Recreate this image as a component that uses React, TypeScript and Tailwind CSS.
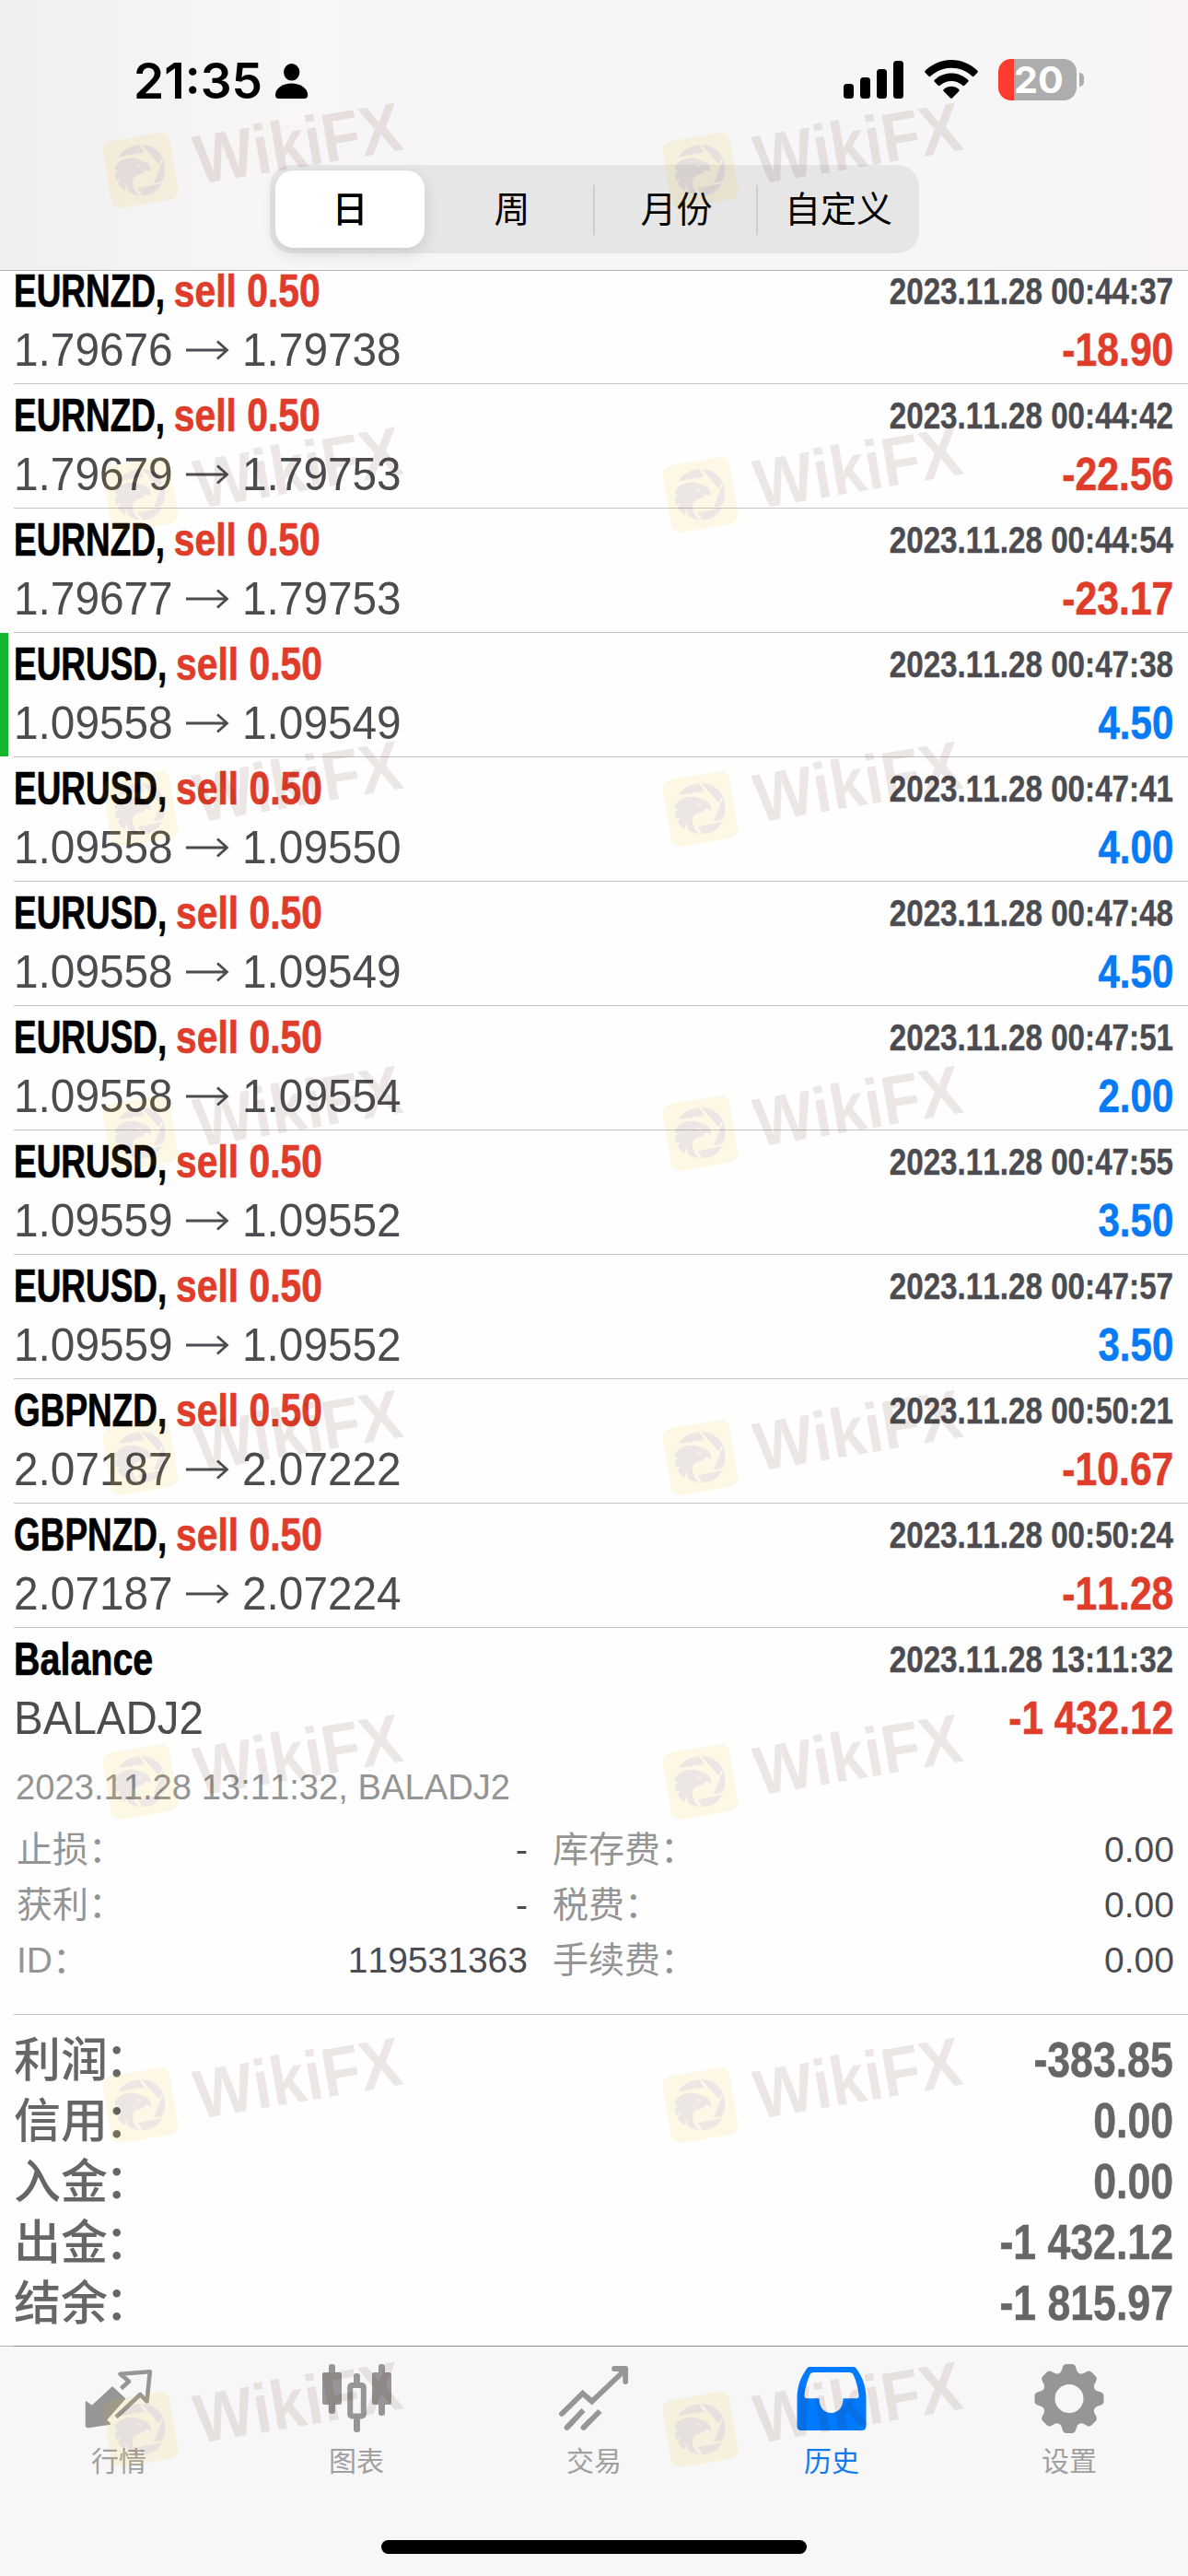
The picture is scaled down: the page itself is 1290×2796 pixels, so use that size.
import React from "react";

type Deal = {
  symbol: string;
  from: string;
  to: string;
  time: string;
  profit: string;
  marked?: boolean;
};

const deals: Deal[] = [
  { symbol: "EURNZD", from: "1.79676", to: "1.79738", time: "2023.11.28 00:44:37", profit: "-18.90" },
  { symbol: "EURNZD", from: "1.79679", to: "1.79753", time: "2023.11.28 00:44:42", profit: "-22.56" },
  { symbol: "EURNZD", from: "1.79677", to: "1.79753", time: "2023.11.28 00:44:54", profit: "-23.17" },
  { symbol: "EURUSD", from: "1.09558", to: "1.09549", time: "2023.11.28 00:47:38", profit: "4.50", marked: true },
  { symbol: "EURUSD", from: "1.09558", to: "1.09550", time: "2023.11.28 00:47:41", profit: "4.00" },
  { symbol: "EURUSD", from: "1.09558", to: "1.09549", time: "2023.11.28 00:47:48", profit: "4.50" },
  { symbol: "EURUSD", from: "1.09558", to: "1.09554", time: "2023.11.28 00:47:51", profit: "2.00" },
  { symbol: "EURUSD", from: "1.09559", to: "1.09552", time: "2023.11.28 00:47:55", profit: "3.50" },
  { symbol: "EURUSD", from: "1.09559", to: "1.09552", time: "2023.11.28 00:47:57", profit: "3.50" },
  { symbol: "GBPNZD", from: "2.07187", to: "2.07222", time: "2023.11.28 00:50:21", profit: "-10.67" },
  { symbol: "GBPNZD", from: "2.07187", to: "2.07224", time: "2023.11.28 00:50:24", profit: "-11.28" },
];

const details = [
  { label: "止损：", value: "-", label2: "库存费：", value2: "0.00" },
  { label: "获利：", value: "-", label2: "税费：", value2: "0.00" },
  { label: "ID：", value: "119531363", label2: "手续费：", value2: "0.00" },
];

const totals = [
  { label: "利润", value: "-383.85" },
  { label: "信用", value: "0.00" },
  { label: "入金", value: "0.00" },
  { label: "出金", value: "-1 432.12" },
  { label: "结余", value: "-1 815.97" },
];

function StatusBar() {
  return (
    <div className="flex h-[179px] items-start justify-between pl-[145px] pr-[113px]">
      <div className="flex items-start pt-[56px]">
        <span className="w-[154px] whitespace-nowrap font-[Inter] text-[53px] font-semibold leading-[65px] text-black">
          <span className="inline-block origin-left scale-x-[1.005]">21:35</span>
        </span>
        <svg className="mt-[13px]" width="36" height="38" viewBox="0 0 36 38">
          <ellipse cx="17.7" cy="9.3" rx="8.6" ry="9.3" />
          <path d="M0 34c0-7 8-12.5 17.6-12.5S35.200 27 35.200 34c0 2.800-1.200 4-4 4H4c-2.800 0-4-1.200-4-4z" />
        </svg>
      </div>
      <div className="flex items-start pt-[64px]">
        <svg width="66" height="44" viewBox="0 0 66 44">
          <rect x="0" y="27" width="11" height="16" rx="3.500" />
          <rect x="18" y="20" width="11" height="23" rx="3.500" />
          <rect x="36" y="11" width="11" height="32" rx="3.500" />
          <rect x="54" y="2" width="11" height="41" rx="3.500" />
        </svg>
        <svg className="ml-[22px]" width="58" height="44" viewBox="0 0 58 44">
          <path d="M29 1C18 1 8 5.500.8 12.600c-.8.8-.8 1.700 0 2.500l3.400 3.500c.8.8 1.600.8 2.400 0C12.600 13 20.500 9.800 29 9.800S45.400 13 51.400 18.600c.8.8 1.600.8 2.400 0l3.400-3.500c.8-.8.8-1.700 0-2.500C50 5.500 40 1 29 1z" />
          <path d="M29 15.500c-7 0-13.300 2.700-18 7.100-.8.8-.8 1.700 0 2.500l3.500 3.500c.8.8 1.600.8 2.400 0 3.300-2.900 7.500-4.600 12.100-4.600s8.800 1.700 12.100 4.600c.8.8 1.600.8 2.400 0l3.500-3.500c.8-.8.8-1.700 0-2.500-4.700-4.400-11-7.100-18-7.100z" />
          <path d="M29 29.800c-3.100 0-5.900 1.100-8 2.900-.9.8-.9 1.700-.1 2.500l6.900 7c.8.8 1.600.8 2.400 0l6.900-7c.8-.8.8-1.700-.1-2.500-2.100-1.800-4.900-2.900-8-2.900z" />
        </svg>
        <div className="ml-[22px] flex h-[45px] w-[85px] rounded-[14px] bg-[linear-gradient(90deg,#ff3b30_17px,#adadad_17px)]">
          <span className="pl-[17px] font-[Inter] text-[40px] font-bold leading-[45px] text-white">
            <span className="inline-block origin-left scale-x-[1.03]">20</span>
          </span>
        </div>
        <div className="ml-[3px] mt-[15px] h-[15px] w-[5px] rounded-r-full bg-[#adadad]" />
      </div>
    </div>
  );
}

function PeriodTabs() {
  return (
    <div className="ml-[293px] flex h-[96px] w-[705px] items-center rounded-[24px] bg-[#e6e6e7] pt-px text-[39px] text-black">
      <div className="-mt-px ml-[6px] flex h-[84px] w-[162px] items-center justify-center rounded-[20px] bg-white pt-[3px] font-medium shadow-[0_6px_18px_rgba(0,0,0,0.12)]">
        日
      </div>
      <div className="flex h-[54px] w-[185px] items-center justify-center border-r-2 border-[#cfcfd1] pl-[7px] pt-[2px]">周</div>
      <div className="flex h-[54px] w-[177px] items-center justify-center border-r-2 border-[#cfcfd1] pl-[2px] pt-[2px]">月份</div>
      <div className="flex h-[54px] flex-1 items-center justify-center pt-[2px]">自定义</div>
    </div>
  );
}

function Arrow() {
  return (
    <svg className="ml-[14px] mr-[14px]" width="48" height="22" viewBox="0 0 48 22" fill="none" stroke="#4b4b50" strokeWidth="2.800">
      <path d="M1 11h44M35 1.500l10.500 9.500L35 20.500" />
    </svg>
  );
}

function DealRow({ deal }: { deal: Deal }) {
  const tone = deal.profit.startsWith("-") ? "scale-x-[0.862] text-[#df3c2b]" : "scale-x-[0.85] text-[#067bf5]";
  return (
    <div className="flex h-[135px]">
      <div className={deal.marked ? "h-[134px] w-[9px] bg-[#15b62f]" : "h-[134px] w-[9px]"} />
      <div className="ml-[6px] flex flex-1 flex-col border-b border-[#c3c3c5] pr-[16px] pt-[6px]">
        <div className="flex h-[57px] justify-between">
          <div className="w-[420px] whitespace-nowrap text-[49.5px] font-bold leading-[56px] text-black [-webkit-text-stroke:0.7px]">
            <span className="inline-block origin-left scale-x-[0.746]">
              {deal.symbol},
              <span className="ml-[13px] inline-block origin-left scale-x-[1.105] text-[#df3c2b]">sell 0.50</span>
            </span>
          </div>
          <span className="origin-right scale-x-[0.82] whitespace-nowrap text-[40.5px] font-bold leading-[56px] text-[#4b4b50] [-webkit-text-stroke:0.4px]">
            {deal.time}
          </span>
        </div>
        <div className="flex h-[70px] justify-between text-[49.5px] leading-[70px]">
          <div className="flex items-center text-[#4b4b50]">
            <span className="w-[172px] origin-left scale-x-[0.965]">{deal.from}</span>
            <Arrow />
            <span className="w-[172px] origin-left scale-x-[0.965]">{deal.to}</span>
          </div>
          <span className={`origin-right font-bold [-webkit-text-stroke:0.6px] ${tone}`}>{deal.profit}</span>
        </div>
      </div>
    </div>
  );
}

function BalanceRow() {
  return (
    <div className="ml-[15px] h-[420px] border-b border-[#c3c3c5] pr-[16px] pt-[6px]">
      <div className="flex h-[57px] justify-between">
        <span className="origin-left scale-x-[0.797] text-[49.5px] font-bold leading-[56px] text-black [-webkit-text-stroke:0.7px]">
          Balance
        </span>
        <span className="origin-right scale-x-[0.82] whitespace-nowrap text-[40.5px] font-bold leading-[56px] text-[#4b4b50] [-webkit-text-stroke:0.4px]">
          2023.11.28 13:11:32
        </span>
      </div>
      <div className="flex h-[70px] justify-between text-[49.5px] leading-[70px]">
        <span className="origin-left scale-x-[0.96] text-[#4b4b50]">BALADJ2</span>
        <span className="origin-right scale-x-[0.855] font-bold text-[#df3c2b] [-webkit-text-stroke:0.6px]">-1 432.12</span>
      </div>
      <div className="flex h-[78px] pl-[2px] pt-[7px]">
        <span className="origin-left scale-x-[0.979] text-[39px] leading-[66px] text-[#949494]">
          2023.11.28 13:11:32, BALADJ2
        </span>
      </div>
      {details.map((d) => (
        <div key={d.label} className="flex h-[60px] items-center text-[39px] leading-[60px] text-[#949494]">
          <div className="flex w-[558px] justify-between pl-[3px]">
            <span>{d.label}</span>
            <span className="text-[#4b4b50]">{d.value}</span>
          </div>
          <div className="-mr-px flex flex-1 justify-between pl-[27px]">
            <span>{d.label2}</span>
            <span className="text-[#4b4b50]">{d.value2}</span>
          </div>
        </div>
      ))}
    </div>
  );
}

function Totals() {
  return (
    <div className="pl-[15px] pr-[16px] pt-[17px] text-[#666666]">
      {totals.map((t) => (
        <div key={t.label} className="flex h-[66px] justify-between">
          <span className="text-[51px] font-medium leading-[66px]">
            {t.label}
            <span className="-ml-[3px]">：</span>
          </span>
          <span className="origin-right scale-x-[0.842] text-[53px] font-bold leading-[64px] [-webkit-text-stroke:0.6px]">{t.value}</span>
        </div>
      ))}
    </div>
  );
}

function QuotesIcon() {
  return (
    <svg width="80" height="80" viewBox="0 0 80 80" strokeLinejoin="round">
      <path d="M4.500 47L11 51.500 33 31 46.500 43.500 26.300 66.500 30.500 71 6.500 74.500 4.500 73.500z" fill="#969696" stroke="#969696" strokeWidth="1.500" />
      <path d="M42.500 32.500L51 24.700 41.500 16.800 73.800 14.300 70.500 46.500 63.300 39 37 63.500" fill="none" stroke="#969696" strokeWidth="4.600" />
    </svg>
  );
}

function ChartIcon() {
  return (
    <svg width="80" height="80" viewBox="0 0 80 80" fill="#969696">
      <rect x="10" y="6" width="7" height="54" rx="3" />
      <rect x="3" y="15" width="21" height="35" rx="2" />
      <rect x="64" y="6" width="7" height="56" rx="3" />
      <rect x="57" y="15" width="21" height="35" rx="2" />
      <rect x="37" y="16" width="7" height="12" rx="3" />
      <rect x="37" y="64" width="7" height="16" rx="3" />
      <rect x="33.200" y="29" width="14.600" height="33.500" rx="2" fill="none" stroke="#969696" strokeWidth="6" />
    </svg>
  );
}

function TradeIcon() {
  return (
    <svg width="80" height="80" viewBox="0 0 80 80" fill="none" stroke="#969696" strokeWidth="5.800">
      <path d="M5 60L27.700 37.800 37.700 46.500 73 13" strokeLinecap="round" />
      <path d="M62 11h12.200v14" strokeLinecap="round" strokeLinejoin="round" />
      <path d="M10.500 75L28.500 56M28.500 75L46.500 57" />
      <path d="M10.500 75L17 68.200M28.500 75L35 68.200" strokeLinecap="round" />
    </svg>
  );
}

function HistoryIcon() {
  return (
    <svg width="80" height="80" viewBox="0 0 80 80">
      <path
        fillRule="evenodd"
        fill="#007aff"
        d="M17 9h46c2 0 3 .6 4 2 7 10 10.500 20 10.500 32v30c0 3-1.500 5-5 5h-65c-3.500 0-5-2-5-5V43C2.500 31 6 21 13 11c1-1.400 2-2 4-2zM21 15c-2.500 0-3.800.7-4.800 3-3 7-4.700 13-5.700 21-.3 3 .5 4.200 3 4.200h13c0 9.500 5 15.700 13 15.700s13-6.200 13-15.700h14c2.500 0 3.300-1.200 3-4.200-1-8-2.700-14-5.700-21-1-2.300-2.300-3-4.800-3z"
      />
    </svg>
  );
}

// Eight rounded teeth, each spanning 45 degrees around the hub.
const teeth = [0, 45, 90, 135, 180, 225, 270, 315];

function SettingsIcon() {
  return (
    <svg width="80" height="82" viewBox="0 0 80 82" className="-mb-[2px]">
      <circle cx="40" cy="43.500" r="22.500" fill="none" stroke="#969696" strokeWidth="14" />
      {teeth.map((angle) => (
        <path
          key={angle}
          transform={`rotate(${angle} 40 43.500)`}
          fill="#969696"
          d="M26 18C30 16.500 31.500 14.500 32.500 10.500 33.300 7.300 34.500 6 37.500 6h5c3 0 4.200 1.300 5 4.500C48.500 14.500 50 16.500 54 18L50 27H30z"
        />
      ))}
    </svg>
  );
}

const tabs = [
  { label: "行情", Icon: QuotesIcon },
  { label: "图表", Icon: ChartIcon },
  { label: "交易", Icon: TradeIcon },
  { label: "历史", Icon: HistoryIcon, active: true },
  { label: "设置", Icon: SettingsIcon },
];

function TabBar() {
  return (
    <div className="flex h-[250px] flex-col bg-[#f7f7f7]">
      <div className="h-px bg-[linear-gradient(90deg,#b2b2b2_15px,#8a8a8c_15px)]" />
      <div className="grid grid-cols-5 pt-[13px]">
        {tabs.map(({ label, Icon, active }) => (
          <div key={label} className="flex flex-col items-center">
            <Icon />
            <span className={active ? "mt-[9px] text-[30px] leading-[46px] text-[#0f7bec]" : "mt-[9px] text-[30px] leading-[46px] text-[#a0a0a0]"}>
              {label}
            </span>
          </div>
        ))}
      </div>
      <div className="mx-auto mt-[62px] h-[15px] w-[462px] rounded-full bg-black" />
    </div>
  );
}

function Watermark({ className }: { className: string }) {
  return (
    <svg className={`absolute overflow-visible ${className}`} width="340" height="124" viewBox="0 0 340 124" opacity="0.095" fill="#4a1000">
      <rect x="3.700" y="40.200" width="73.600" height="73.600" rx="10" transform="rotate(-9.600 40.500 77)" fill="#f5be00" />
      <path d="M16.800 62.300C19 58 25 51 39.400 49l5 8.700z" />
      <path d="M41.700 49C52 49 60 54 64.700 63.300L60 70z" />
      <path d="M65 64.700C68.500 73 68 82 64 89l-9 1.500z" />
      <path d="M64 91c-4 8-12 13.500-21 13.300l-5.500-8z" />
      <path d="M13 73c4-7 11-9.700 18-9.300 5 .2 9 1.300 12.600 3.600 5 1 8.600 4 8.400 11.700-2-2.500-4-2.700-7-1.700 0 2-1 3-3.500 3.400C34 82 31.500 86 32 91c.5 5 3 9.500 8 13-5-.2-9-1.500-12.500-4-1.500-3-1.500-6-.8-9-2 3-2.800 5-2.500 8.300-4-2.300-6.500-5-8.200-8.600l4-6.200-5 3.800c-1.500-3-2-5-2-8l5-4-5 1c-.3-1.500-.3-2.800 0-4.300z" />
      <path d="M34 70c2.500 1.800 5 2.200 7.500 1.200C41 73.500 37 74 34 70z" fill="#f5be00" />
      <text
        x="87"
        y="108"
        transform="rotate(-9.600)"
        fontFamily="Liberation Sans"
        fontWeight="700"
        fontSize="75"
        textLength="227"
        lengthAdjust="spacingAndGlyphs"
      >
        WikiFX
      </text>
    </svg>
  );
}

export default function App() {
  return (
    <div className="relative flex h-[2796px] w-[1290px] flex-col overflow-hidden bg-[#fefefe] font-['Liberation_Sans','Noto_Sans_CJK_SC',sans-serif] [font-kerning:none]">
      <header className="h-[294px] border-b border-[#b2b2b2] bg-[linear-gradient(90deg,#efefef_0px,#f3f2f2_120px,#f8f5f5_290px,#f6f6f6_460px,#f6f6f6_1050px,#f8f4f4_1290px)]">
        <StatusBar />
        <PeriodTabs />
      </header>
      <main className="h-[2252px]">
        <div className="-mt-[12px]">
          {deals.map((deal) => (
            <DealRow key={deal.time} deal={deal} />
          ))}
          <BalanceRow />
          <Totals />
        </div>
      </main>
      <TabBar />
      <Watermark className="left-[112px] top-[108px]" />
      <Watermark className="left-[720px] top-[108px]" />
      <Watermark className="left-[112px] top-[460px]" />
      <Watermark className="left-[720px] top-[460px]" />
      <Watermark className="left-[112px] top-[801px]" />
      <Watermark className="left-[720px] top-[801px]" />
      <Watermark className="left-[112px] top-[1153px]" />
      <Watermark className="left-[720px] top-[1153px]" />
      <Watermark className="left-[112px] top-[1505px]" />
      <Watermark className="left-[720px] top-[1505px]" />
      <Watermark className="left-[112px] top-[1857px]" />
      <Watermark className="left-[720px] top-[1857px]" />
      <Watermark className="left-[112px] top-[2208px]" />
      <Watermark className="left-[720px] top-[2208px]" />
      <Watermark className="left-[112px] top-[2560px]" />
      <Watermark className="left-[720px] top-[2560px]" />
    </div>
  );
}
